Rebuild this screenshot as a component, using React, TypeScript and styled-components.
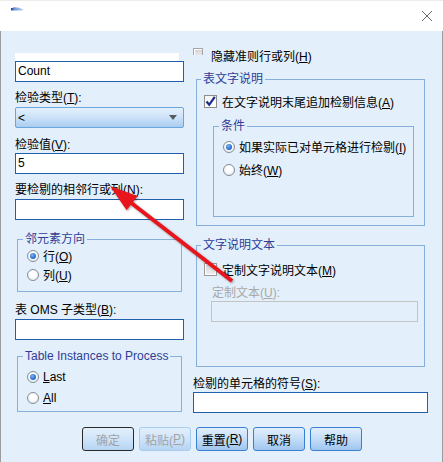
import React from "react";
import styled, { createGlobalStyle, css } from "styled-components";

const GlobalStyle = createGlobalStyle`
  html, body {
    margin: 0;
    padding: 0;
    background: #ffffff;
  }
  body {
    font-family: "Liberation Sans", "Noto Sans CJK SC", sans-serif;
    font-size: 12px;
    color: #000;
  }
`;

const Window = styled.div`
  position: relative;
  width: 443px;
  height: 462px;
  display: flex;
  flex-direction: column;
  overflow: hidden;
`;

const TitleBar = styled.div`
  height: 31px;
  flex: none;
  background: #ffffff;
  border-top: 1px solid #ececec;
  box-sizing: border-box;
  display: flex;
  align-items: flex-start;
  justify-content: space-between;
  padding: 6px 10px 0 11px;
`;

const Body = styled.div`
  flex: 1;
  background: #e3effa;
  border-left: 1px solid #9c9c9c;
  border-right: 1px solid #9c9c9c;
  padding: 0 13px 0 14px;
  display: flex;
  flex-direction: column;
`;

const Columns = styled.div`
  display: flex;
  gap: 9px;
  height: 383px;
`;

const Column = styled.div<{ $width: number }>`
  width: ${(p) => p.$width}px;
  display: flex;
  flex-direction: column;
`;

const Key = styled.u`
  text-underline-offset: 1px;
`;

const Label = styled.div<{ $top?: number; $left?: number; $disabled?: boolean }>`
  line-height: 15px;
  height: 15px;
  margin-top: ${(p) => p.$top ?? 0}px;
  margin-left: ${(p) => p.$left ?? 0}px;
  white-space: nowrap;
  color: ${(p) => (p.$disabled ? "#a9a9a9" : "#000")};
`;

const ListTail = styled.div`
  margin-top: 22px;
  width: 164px;
  height: 8px;
  background: #ffffff;
`;

const TextBox = styled.div<{ $top?: number; $left?: number; $width?: number; $disabled?: boolean }>`
  box-sizing: border-box;
  height: 21px;
  margin-top: ${(p) => p.$top ?? 0}px;
  margin-left: ${(p) => p.$left ?? 0}px;
  width: ${(p) => (p.$width ? `${p.$width}px` : "100%")};
  border: 1px solid #1f5fae;
  background: #ffffff;
  padding: 0 2px;
  line-height: 19px;
  ${(p) =>
    p.$disabled &&
    css`
      border-color: #c3c3c3;
      background: #e3effa;
    `}
`;

const Select = styled.div`
  box-sizing: border-box;
  margin-top: 1px;
  height: 21px;
  border: 1px solid #6aa5df;
  border-radius: 2px;
  background: linear-gradient(#e4f0fc, #cfe3f8 45%, #aacdf1);
  display: flex;
  align-items: center;
  justify-content: space-between;
  padding: 0 6px 0 2px;
`;

const DropArrow = styled.span`
  width: 0;
  height: 0;
  border-left: 4px solid transparent;
  border-right: 4px solid transparent;
  border-top: 5px solid #555b63;
`;

const Group = styled.fieldset<{
  $top: number;
  $left: number;
  $width: number;
  $height: number;
  $pad: string;
}>`
  box-sizing: border-box;
  margin: ${(p) => p.$top}px 0 0 ${(p) => p.$left}px;
  width: ${(p) => p.$width}px;
  height: ${(p) => p.$height}px;
  min-width: 0;
  border: 1px solid #86afdb;
  padding: ${(p) => p.$pad};
  display: flex;
  flex-direction: column;
`;

const Legend = styled.legend<{ $shift: number }>`
  line-height: 14px;
  padding: 0 2px;
  margin-left: ${(p) => p.$shift}px;
  color: #2f3d98;
  white-space: nowrap;
`;

const OptionRow = styled.div<{ $h: number }>`
  height: ${(p) => p.$h}px;
  display: flex;
  align-items: center;
  gap: 4px;
  white-space: nowrap;
`;

const RadioDot = styled.span<{ $on?: boolean }>`
  position: relative;
  box-sizing: border-box;
  width: 12px;
  height: 12px;
  border-radius: 50%;
  border: 1px solid #858c94;
  background: radial-gradient(circle at 50% 40%, #ffffff 35%, #d9e3ee 100%);
  flex: none;
  ${(p) =>
    p.$on &&
    css`
      &::after {
        content: "";
        position: absolute;
        left: 2px;
        top: 2px;
        width: 6px;
        height: 6px;
        border-radius: 50%;
        background: radial-gradient(circle at 40% 35%, #7fb5f0, #1c62c9 70%);
      }
    `}
`;

const Box = styled.span<{ $faded?: boolean }>`
  box-sizing: border-box;
  width: 13px;
  height: 13px;
  flex: none;
  border: 1px solid #8c8c8c;
  background: linear-gradient(#f4f4f4, #ffffff);
  display: flex;
  align-items: center;
  justify-content: center;
  ${(p) =>
    p.$faded &&
    css`
      border-color: #9a9a9a;
      background: linear-gradient(#d6d6d6, #f0f0f0);
      box-shadow: inset 0 0 0 1px #ffffff;
    `}
`;

const CheckRow = styled.div<{ $top?: number; $h: number; $left?: number }>`
  height: ${(p) => p.$h}px;
  margin-top: ${(p) => p.$top ?? 0}px;
  margin-left: ${(p) => p.$left ?? 0}px;
  display: flex;
  align-items: center;
  gap: 5px;
  white-space: nowrap;
`;

const ClippedBox = styled.span`
  box-sizing: border-box;
  width: 10px;
  height: 7px;
  margin-top: -7px;
  border: 1px solid #a6a6a6;
  border-bottom: none;
  background: linear-gradient(#cfcfcf, #e9e9e9);
  box-shadow: inset 1px 1px 0 #ffffff;
  flex: none;
  margin-right: 3px;
`;

const ButtonBar = styled.div`
  margin-top: 13px;
  padding-left: 67px;
  display: flex;
  gap: 5px;
`;

const Button = styled.div<{ $disabled?: boolean; $default?: boolean }>`
  box-sizing: border-box;
  width: 52px;
  height: 24px;
  border-radius: 3px;
  border: 1px solid #3a80d0;
  background: linear-gradient(#e2effc, #c4ddf7 50%, #9ec6ef);
  display: flex;
  align-items: center;
  justify-content: center;
  white-space: nowrap;
  color: #000;
  ${(p) =>
    p.$disabled &&
    css`
      color: #a3a3a3;
      border-color: #a9cdef;
      background: linear-gradient(#e2effc, #cfe4f9 50%, #b5d4f3);
    `}
  ${(p) =>
    p.$default &&
    css`
      border-color: #2a2a2a;
    `}
`;

const Overlay = styled.svg`
  position: absolute;
  left: 0;
  top: 0;
  pointer-events: none;
  filter: drop-shadow(1px 1px 1px rgba(0, 0, 0, 0.35));
`;

const Radio = ({ on, children, h }: { on?: boolean; children: React.ReactNode; h: number }) => (
  <OptionRow $h={h}>
    <RadioDot $on={on} />
    <span>{children}</span>
  </OptionRow>
);

const CheckMark = () => (
  <svg width="11" height="11" viewBox="0 0 11 11">
    <path d="M1.5 5.5 L4.2 8.8 L9.8 0.8" fill="none" stroke="#1b2a86" strokeWidth="2.2" />
  </svg>
);

const App = () => {
  return (
    <Window>
      <GlobalStyle />
      <TitleBar>
        <svg width="13" height="4" viewBox="0 0 13 4">
          <defs>
            <linearGradient id="ti" x1="0" x2="1">
              <stop offset="0" stopColor="#1b3f86" />
              <stop offset="0.3" stopColor="#6f9ad6" />
              <stop offset="1" stopColor="#b9d2ef" />
            </linearGradient>
          </defs>
          <path d="M0 1 L2 1 L2 0.4 Q8 0 12 2.5 L12 3.5 L0 3.5 Z" fill="url(#ti)" />
        </svg>
        <svg width="12" height="12" viewBox="0 0 12 12" style={{ marginTop: 3 }}>
          <path d="M1 1 L11 11 M11 1 L1 11" stroke="#6b6b6b" strokeWidth="1" />
        </svg>
      </TitleBar>
      <Body>
        <Columns>
          <Column $width={169}>
            <ListTail />
            <TextBox>Count</TextBox>
            <Label $top={9}>
              检验类型(<Key>T</Key>):
            </Label>
            <Select>
              <span>&lt;</span>
              <DropArrow />
            </Select>
            <Label $top={10}>
              检验值(<Key>V</Key>):
            </Label>
            <TextBox>5</TextBox>
            <Label $top={9}>
              要检剔的相邻行或列(<Key>N</Key>):
            </Label>
            <TextBox $top={1} />
            <Group $top={12} $left={2} $width={165} $height={60} $pad="0 8px 3px 9px">
              <Legend $shift={-4}>邻元素方向</Legend>
              <Radio on h={19}>
                行(<Key>O</Key>)
              </Radio>
              <Radio h={19}>
                列(<Key>U</Key>)
              </Radio>
            </Group>
            <Label $top={11}>
              表 OMS 子类型(<Key>B</Key>):
            </Label>
            <TextBox $top={1} />
            <Group $top={9} $left={2} $width={165} $height={63} $pad="3px 8px 2px 9px">
              <Legend $shift={-4}>Table Instances to Process</Legend>
              <Radio on h={21}>
                <Key>L</Key>ast
              </Radio>
              <Radio h={21}>
                <Key>A</Key>ll
              </Radio>
            </Group>
          </Column>
          <Column $width={235}>
            <CheckRow $top={16} $h={16} $left={0}>
              <ClippedBox />
              <span>
                隐藏准则行或列(<Key>H</Key>)
              </span>
            </CheckRow>
            <Group $top={9} $left={3} $width={229} $height={154} $pad="0 8px 8px 7px">
              <Legend $shift={-3}>表文字说明</Legend>
              <CheckRow $top={7} $h={16}>
                <Box>
                  <CheckMark />
                </Box>
                <span>
                  在文字说明末尾追加检剔信息(<Key>A</Key>)
                </span>
              </CheckRow>
              <Group $top={10} $left={9} $width={201} $height={98} $pad="2px 6px 4px 9px">
                <Legend $shift={-4}>条件</Legend>
                <Radio on h={23}>
                  如果实际已对单元格进行检剔(<Key>I</Key>)
                </Radio>
                <Radio h={23}>
                  始终(<Key>W</Key>)
                </Radio>
              </Group>
            </Group>
            <Group $top={12} $left={3} $width={229} $height={129} $pad="0 6px 6px 7px">
              <Legend $shift={-3}>文字说明文本</Legend>
              <CheckRow $top={9} $h={16}>
                <Box $faded />
                <span>
                  定制文字说明文本(<Key>M</Key>)
                </span>
              </CheckRow>
              <Label $top={9} $left={8} $disabled>
                定制文本(<Key>U</Key>):
              </Label>
              <TextBox $left={7} $width={207} $disabled />
            </Group>
            <Label $top={10}>
              检剔的单元格的符号(<Key>S</Key>):
            </Label>
            <TextBox />
          </Column>
        </Columns>
        <ButtonBar>
          <Button $disabled $default>
            确定
          </Button>
          <Button $disabled>
            粘贴(<Key>P</Key>)
          </Button>
          <Button>
            重置(<Key>R</Key>)
          </Button>
          <Button>取消</Button>
          <Button>帮助</Button>
        </ButtonBar>
      </Body>
      <Overlay width="443" height="462" viewBox="0 0 443 462">
        <line x1="232" y1="281" x2="130" y2="202" stroke="#e8161c" strokeWidth="4" />
        <polygon points="110,186 137.6,196.1 126.6,210.3" fill="#e8161c" />
      </Overlay>
    </Window>
  );
};

export default App;
